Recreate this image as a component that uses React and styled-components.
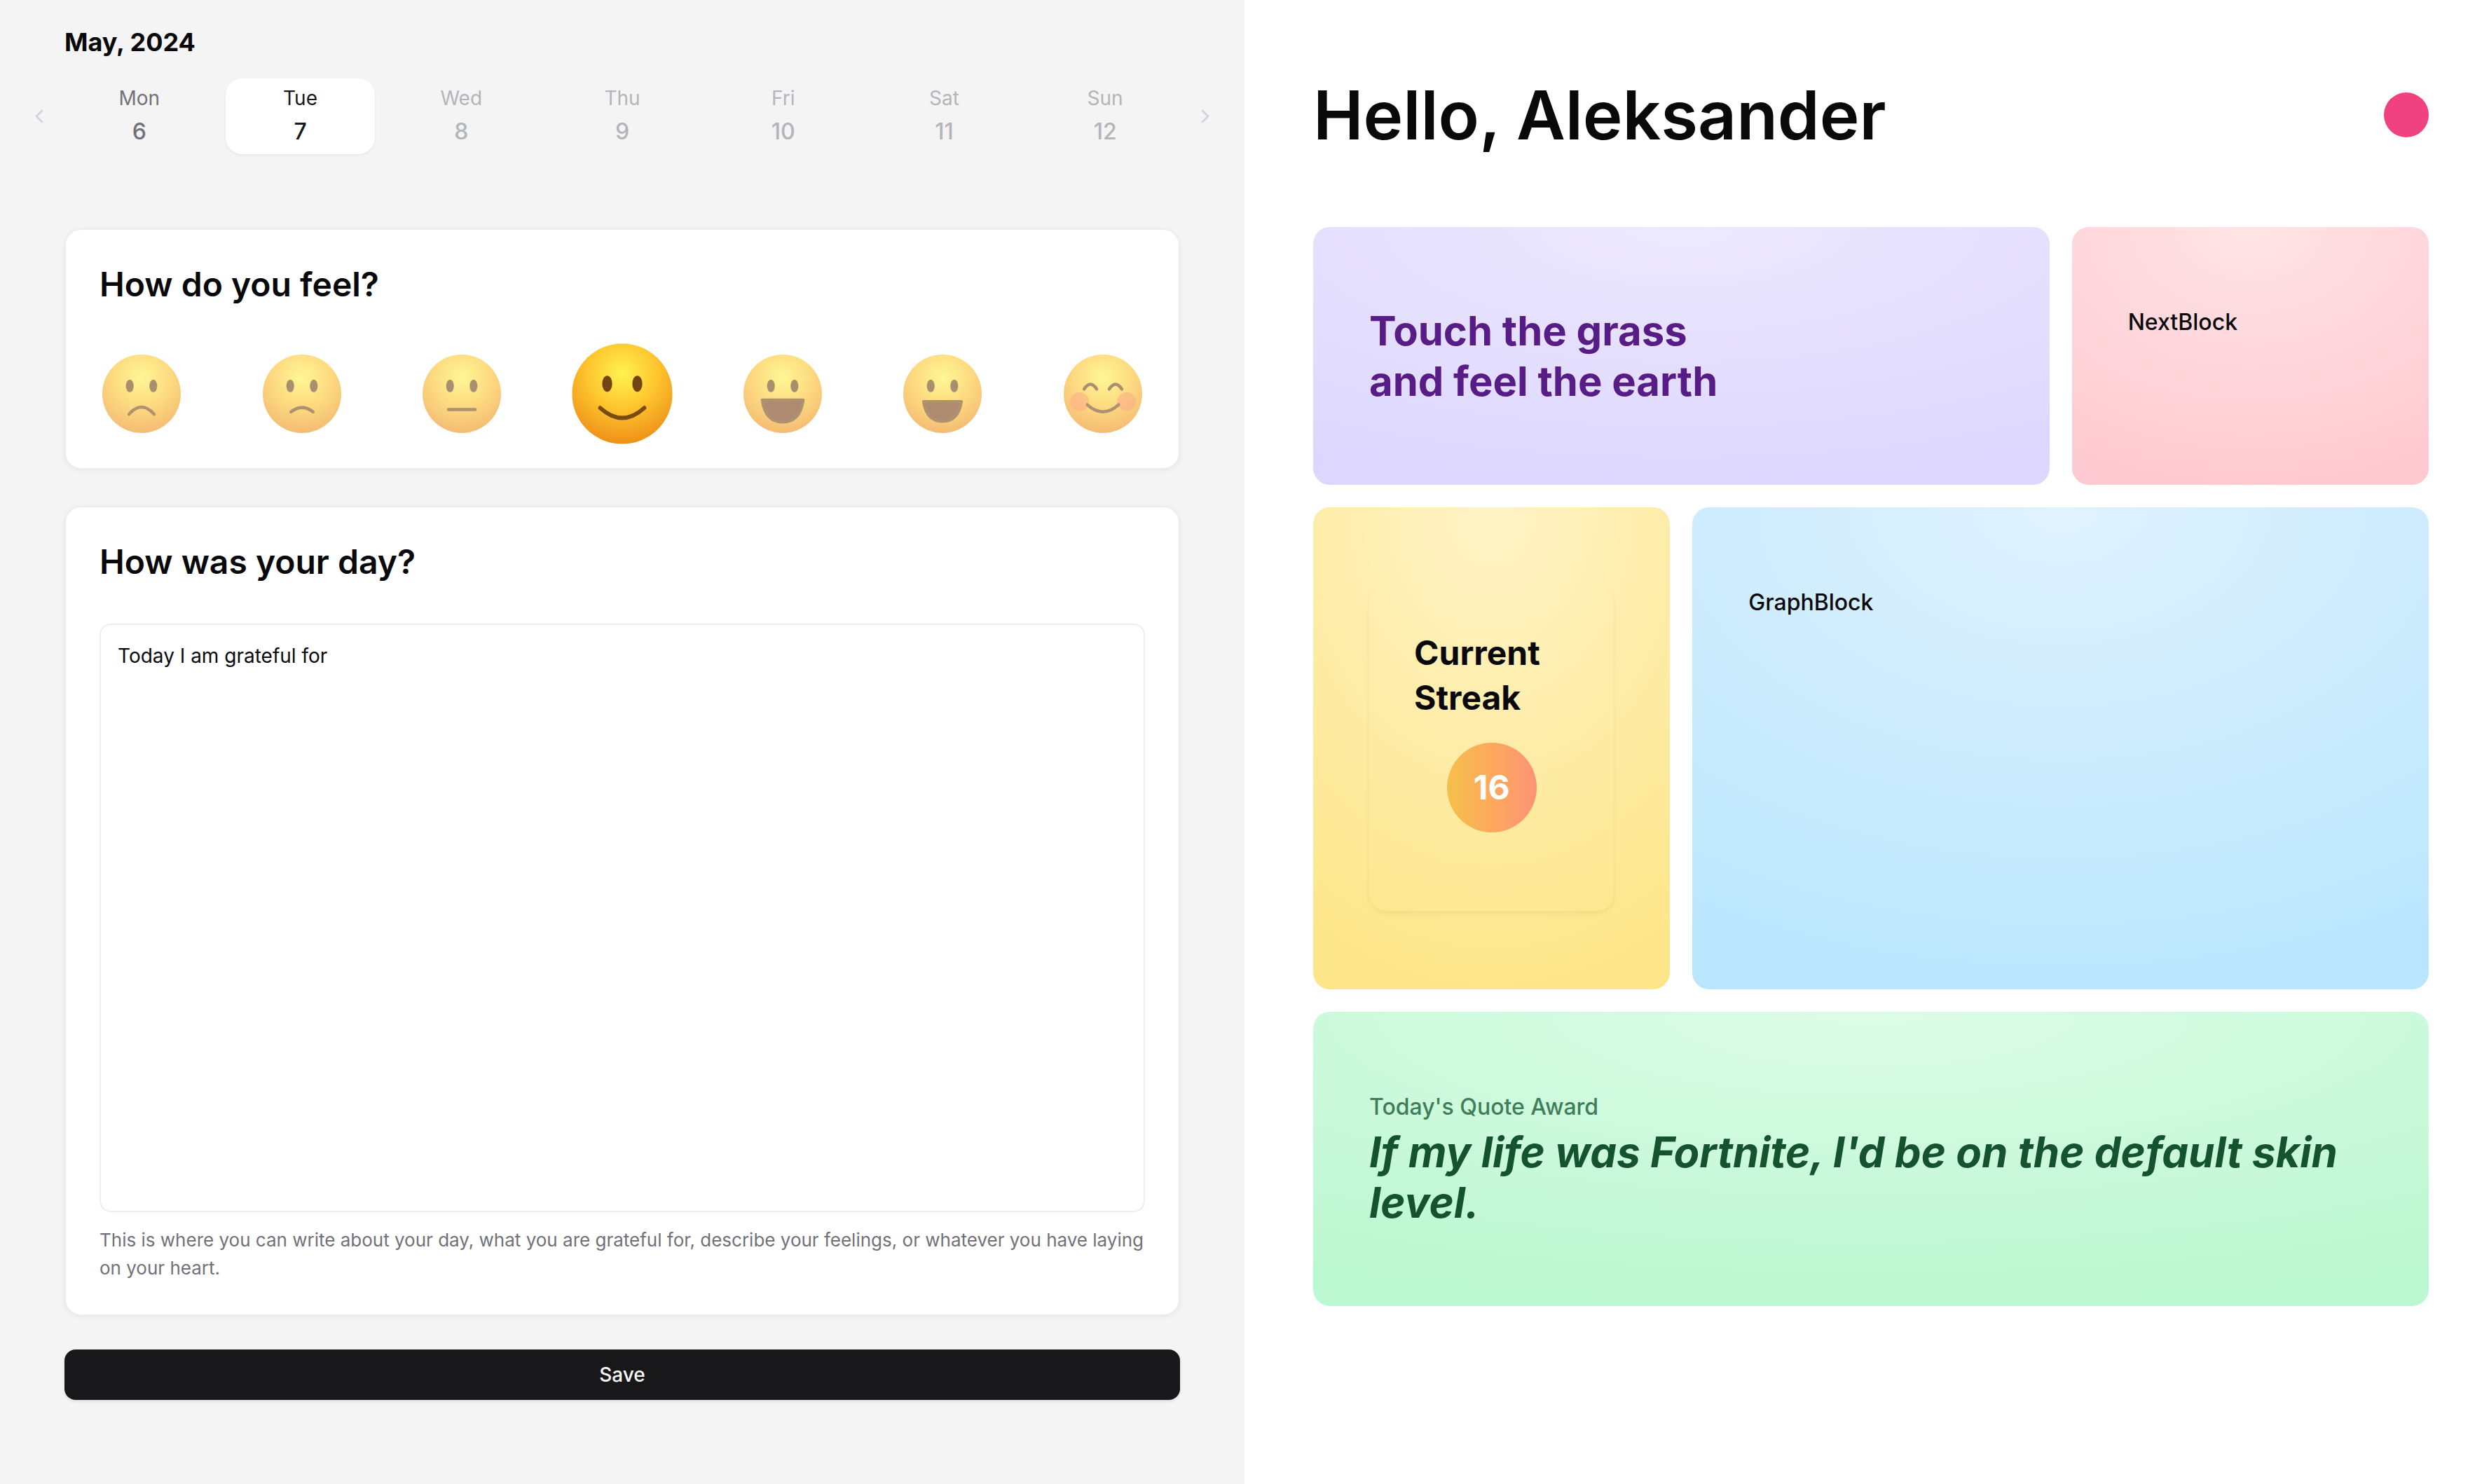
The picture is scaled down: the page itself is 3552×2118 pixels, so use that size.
import React, { useState } from "react";
import styled, { createGlobalStyle } from "styled-components";
import { ChevronLeft, ChevronRight } from "lucide-react";

const GlobalStyle = createGlobalStyle`
  *, *::before, *::after { box-sizing: border-box; }
  body {
    margin: 0;
    background: #ffffff;
    color: #09090b;
    font-family: Inter, "Liberation Sans", sans-serif;
    font-size: 32px;
    line-height: 48px;
  }
  h1, h2, h3, p, blockquote { margin: 0; }
  button, textarea { font: inherit; color: inherit; }
`;

const Page = styled.main`
  display: grid;
  grid-template-columns: 1fr 1fr;
  min-height: 100vh;
`;

const JournalPanel = styled.section`
  display: flex;
  flex-direction: column;
  padding: 32px 92px;
  background: #f4f4f4;
`;

const OverviewPanel = styled.section`
  padding: 116px 86px 96px 98px;
`;

const Month = styled.h2`
  font-size: 36px;
  font-weight: 700;
  line-height: 56px;
  margin-bottom: 24px;
`;

const Week = styled.nav`
  display: flex;
  align-items: center;
  margin: 0 -60px 106px;
`;

const Days = styled.div`
  flex: 1;
  display: grid;
  grid-template-columns: repeat(7, 1fr);
  gap: 16px;
`;

const ArrowButton = styled.button`
  display: grid;
  place-items: center;
  width: 48px;
  height: 48px;
  margin: ${(p) => (p.$side === "left" ? "0 12px 0 0" : "0 0 0 12px")};
  padding: 0;
  border: 0;
  background: none;
  color: #d4d4d8;
`;

const Day = styled.button`
  display: flex;
  flex-direction: column;
  align-items: center;
  gap: 4px;
  padding: 8px;
  border: 0;
  border-radius: 24px;
  background: ${(p) => (p.$active ? "#ffffff" : "transparent")};
  box-shadow: ${(p) => (p.$active ? "0 2px 4px rgba(0, 0, 0, 0.05)" : "none")};
  color: ${(p) => (p.$active ? "#18181b" : p.$future ? "#b4b4bb" : "#71717a")};
`;

const DayName = styled.span`
  font-size: 28px;
  line-height: 40px;
`;

const DayNumber = styled.span`
  font-size: 32px;
  font-weight: 500;
  line-height: 48px;
`;

const Form = styled.form`
  display: flex;
  flex-direction: column;
`;

const Card = styled.section`
  padding: 46px 48px;
  border: 2px solid #ededef;
  border-radius: 24px;
  background: #ffffff;
  box-shadow: 0 2px 6px rgba(0, 0, 0, 0.06);
  margin-bottom: ${(p) => (p.$gap)}px;
`;

const CardTitle = styled.h3`
  font-size: 48px;
  font-weight: 600;
  line-height: 64px;
  margin-bottom: ${(p) => p.$gap}px;
`;

const Moods = styled.div`
  display: flex;
  justify-content: space-between;
`;

const MoodButton = styled.button`
  width: 120px;
  height: 120px;
  padding: 4px;
  border: 0;
  background: none;
  opacity: ${(p) => (p.$active ? 1 : 0.6)};
  transform: ${(p) => (p.$active ? "scale(1.28)" : "none")};

  svg { display: block; width: 100%; height: 100%; }
`;

const Notes = styled.textarea`
  display: block;
  width: 100%;
  height: 840px;
  padding: 24px;
  border: 2px solid #eeeef0;
  border-radius: 16px;
  background: transparent;
  font-size: 28px;
  line-height: 40px;
  resize: none;
  outline: none;
`;

const Hint = styled.p`
  margin-top: 20px;
  color: #71717a;
  font-size: 26px;
  line-height: 40px;
`;

const SaveButton = styled.button`
  height: 72px;
  border: 0;
  border-radius: 16px;
  background: #18181b;
  box-shadow: 0 2px 4px rgba(0, 0, 0, 0.1);
  color: #fafafa;
  font-size: 28px;
  font-weight: 500;
`;

const Header = styled.header`
  display: flex;
  align-items: center;
  justify-content: space-between;
  margin-bottom: 112px;
`;

const Greeting = styled.h1`
  font-size: 96px;
  font-weight: 600;
  line-height: 96px;
`;

const Avatar = styled.button`
  width: 64px;
  height: 64px;
  padding: 0;
  border: 0;
  border-radius: 50%;
  background: #f0427f;
`;

const Bento = styled.div`
  display: grid;
  grid-template-columns: repeat(3, 1fr);
  gap: 32px;
`;

const Tile = styled.article`
  grid-column: span ${(p) => p.$span};
  padding: 112px 80px;
  border-radius: 24px;
  background: radial-gradient(100% 100% at top, ${(p) => p.$from}, ${(p) => p.$to});
`;

const Challenge = styled.h2`
  color: #581c87;
  font-size: 58px;
  font-weight: 700;
  line-height: 72px;
`;

const TileName = styled.p`
  font-size: 32px;
  font-weight: 500;
  line-height: 48px;
`;

const Streak = styled.div`
  display: flex;
  flex-direction: column;
  gap: 32px;
  height: 464px;
  padding: 64px;
  border-radius: 24px;
  box-shadow: 0 4px 6px rgba(80, 80, 0, 0.07);
`;

const StreakTitle = styled.h3`
  font-size: 48px;
  font-weight: 700;
  line-height: 64px;
`;

const StreakCount = styled.div`
  display: grid;
  place-items: center;
  align-self: center;
  width: 128px;
  height: 128px;
  border-radius: 50%;
  background: linear-gradient(90deg, #f5bf4c, #fda95c 50%, #fb9376);
  color: #ffffff;
  font-size: 48px;
  font-weight: 700;
`;

const Quote = styled.blockquote`
  display: flex;
  flex-direction: column;
  gap: 4px;
  color: #14532d;
`;

const QuoteLabel = styled.p`
  color: #3f7d58;
  font-size: 32px;
  font-weight: 500;
  line-height: 48px;
`;

const QuoteText = styled.p`
  font-size: 60px;
  font-style: italic;
  font-weight: 700;
  line-height: 72px;
`;

const days = [
  ["Mon", 6], ["Tue", 7], ["Wed", 8], ["Thu", 9], ["Fri", 10], ["Sat", 11], ["Sun", 12],
];
const today = 7;

const moods = [
  { name: "Awful", mouth: <path d="M34 76 Q50 58 66 76" /> },
  { name: "Sad", mouth: <path d="M36 73 Q50 62 64 73" /> },
  { name: "Neutral", mouth: <path d="M33 70 H67" /> },
  { name: "Fine", mouth: <path d="M28 64 Q50 84 72 64" /> },
  { name: "Good", mouth: <path d="M24 58 H76 Q72 86 50 86 Q28 86 24 58 Z" fill="#7a3f12" /> },
  { name: "Great", mouth: <path d="M26 60 H74 Q70 85 50 85 Q30 85 26 60 Z" fill="#7a3f12" /> },
  { name: "Happy", mouth: <path d="M30 64 Q50 82 70 64" />, happy: true },
];

function Face({ id, mouth, happy }) {
  return (
    <svg viewBox="0 0 100 100" aria-hidden="true">
      <defs>
        <radialGradient id={id} cx="50%" cy="30%" r="70%">
          <stop offset="0" stopColor="#fff250" />
          <stop offset="0.5" stopColor="#fdc52e" />
          <stop offset="1" stopColor="#ee9018" />
        </radialGradient>
      </defs>
      <circle cx="50" cy="50" r="50" fill={`url(#${id})`} />
      {happy && (
        <g fill="#ff7a3d" opacity="0.6">
          <circle cx="20" cy="60" r="12" />
          <circle cx="80" cy="60" r="12" />
        </g>
      )}
      {happy ? (
        <g fill="none" stroke="#70450f" strokeWidth="4" strokeLinecap="round">
          <path d="M26 44 Q34 32 42 44" />
          <path d="M58 44 Q66 32 74 44" />
        </g>
      ) : (
        <g fill="#70450f">
          <ellipse cx="35" cy="40" rx="5" ry="8" />
          <ellipse cx="65" cy="40" rx="5" ry="8" />
        </g>
      )}
      <g fill="none" stroke="#7a4a10" strokeWidth="4" strokeLinecap="round" strokeLinejoin="round">
        {mouth}
      </g>
    </svg>
  );
}

export default function App() {
  const [selected, setSelected] = useState(today);
  const [mood, setMood] = useState("Fine");
  const [text, setText] = useState("Today I am grateful for");

  return (
    <>
      <GlobalStyle />
      <Page>
        <JournalPanel>
          <Month>May, 2024</Month>
          <Week aria-label="Week">
            <ArrowButton $side="left" type="button" aria-label="Previous week">
              <ChevronLeft size={32} />
            </ArrowButton>
            <Days>
              {days.map(([name, number]) => (
                <Day
                  key={number}
                  type="button"
                  $active={number === selected}
                  $future={number > today}
                  onClick={() => setSelected(number)}
                >
                  <DayName>{name}</DayName>
                  <DayNumber>{number}</DayNumber>
                </Day>
              ))}
            </Days>
            <ArrowButton $side="right" type="button" aria-label="Next week">
              <ChevronRight size={32} />
            </ArrowButton>
          </Week>

          <Form onSubmit={(e) => e.preventDefault()}>
            <Card $gap={52}>
              <CardTitle $gap={64}>How do you feel?</CardTitle>
              <Moods>
                {moods.map((m) => (
                  <MoodButton
                    key={m.name}
                    type="button"
                    aria-label={m.name}
                    aria-pressed={m.name === mood}
                    $active={m.name === mood}
                    onClick={() => setMood(m.name)}
                  >
                    <Face id={`face-${m.name}`} mouth={m.mouth} happy={m.happy} />
                  </MoodButton>
                ))}
              </Moods>
            </Card>

            <Card $gap={48}>
              <CardTitle $gap={56}>
                <label htmlFor="notes">How was your day?</label>
              </CardTitle>
              <Notes id="notes" value={text} onChange={(e) => setText(e.target.value)} />
              <Hint>
                This is where you can write about your day, what you are grateful for, describe
                your feelings, or whatever you have laying on your heart.
              </Hint>
            </Card>

            <SaveButton type="submit">Save</SaveButton>
          </Form>
        </JournalPanel>

        <OverviewPanel>
          <Header>
            <Greeting>Hello, Aleksander</Greeting>
            <Avatar type="button" aria-label="Account" />
          </Header>
          <Bento>
            <Tile $span={2} $from="#ede9fe" $to="#ddd6fe">
              <Challenge>
                Touch the grass
                <br />
                and feel the earth
              </Challenge>
            </Tile>
            <Tile $span={1} $from="#ffe4e6" $to="#fecad1">
              <TileName>NextBlock</TileName>
            </Tile>
            <Tile $span={1} $from="#fef3c7" $to="#fde68a">
              <Streak>
                <StreakTitle>
                  Current
                  <br />
                  Streak
                </StreakTitle>
                <StreakCount>16</StreakCount>
              </Streak>
            </Tile>
            <Tile $span={2} $from="#e0f2fe" $to="#bae6fd">
              <TileName>GraphBlock</TileName>
            </Tile>
            <Tile $span={3} $from="#dcfce7" $to="#bbf7d0">
              <Quote>
                <QuoteLabel>Today's Quote Award</QuoteLabel>
                <QuoteText>
                  If my life was Fortnite, I'd be on the default skin level.
                </QuoteText>
              </Quote>
            </Tile>
          </Bento>
        </OverviewPanel>
      </Page>
    </>
  );
}
